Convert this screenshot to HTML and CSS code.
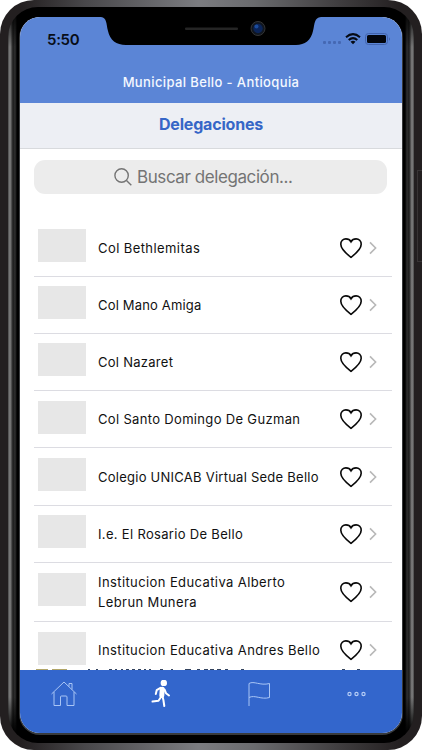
FILE: index.html
```html
<!DOCTYPE html>
<html lang="es">
<head>
<meta charset="utf-8">
<title>Delegaciones</title>
<link rel="stylesheet" href="styles.css">
</head>
<body>
<svg class="defs" width="0" height="0">
  <symbol id="heart" viewBox="0 0 24 22"><path d="M12 20.3C8.5 17.6 1.8 12.6 1.8 7.3C1.8 4 4.1 1.9 6.9 1.9C9.2 1.9 11 3 12 4.800C13 3 14.8 1.9 17.1 1.9C19.9 1.9 22.2 4 22.2 7.3C22.2 12.6 15.5 17.6 12 20.3Z"/></symbol>
  <symbol id="chevron" viewBox="0 0 8 14"><path d="M1 1.4L6.6 7L1 12.6"/></symbol>
</svg>
<div class="phone">
  <i class="side-button"></i>
  <div class="bezel">
    <div class="screen">
      <header class="header">
        <div class="status">
          <span class="time">5:50</span>
          <svg class="indicators" width="70" height="14" viewBox="0 0 70 14">
            <g fill="#4568b3"><rect x="0" y="8" width="3" height="3" rx="1"/><rect x="5" y="8" width="3" height="3" rx="1"/><rect x="10" y="8" width="3" height="3" rx="1"/><rect x="15" y="8" width="3" height="3" rx="1"/></g>
            <g fill="none" stroke="#050a14" stroke-width="2"><path d="M23 4.2Q30 -2 37 4.2"/><path d="M25.7 7Q30 3.2 34.3 7"/></g>
            <path d="M27.5 8.7Q30 7 32.5 8.7L30 11.3Z" fill="#050a14"/>
            <rect x="42.5" y=".5" width="22" height="11" rx="3" fill="none" stroke="#4264ae"/>
            <rect x="44" y="2" width="19" height="8" rx="1.5" fill="#02050c"/>
            <path d="M66 4.2Q68 6 66 7.8Z" fill="#4264ae"/>
          </svg>
        </div>
        <div class="place"><span>Municipal Bello - Antioquia</span></div>
      </header>
      <div class="title"><span>Delegaciones</span></div>
      <main class="content">
        <div class="search">
          <svg width="18" height="18" viewBox="0 0 18 18"><circle cx="7.6" cy="7.5" r="6.7"/><path d="M12.5 12.4L17.3 17.2"/></svg>
          <span>Buscar delegación...</span>
        </div>
        <ul class="list">
          <li class="row"><i class="thumb"></i><span class="name n1">Col Bethlemitas</span><svg class="heart"><use href="#heart"/></svg><svg class="chevron"><use href="#chevron"/></svg></li>
          <li class="row"><i class="thumb"></i><span class="name n2">Col Mano Amiga</span><svg class="heart"><use href="#heart"/></svg><svg class="chevron"><use href="#chevron"/></svg></li>
          <li class="row"><i class="thumb"></i><span class="name n3">Col Nazaret</span><svg class="heart"><use href="#heart"/></svg><svg class="chevron"><use href="#chevron"/></svg></li>
          <li class="row"><i class="thumb"></i><span class="name n4">Col Santo Domingo De Guzman</span><svg class="heart"><use href="#heart"/></svg><svg class="chevron"><use href="#chevron"/></svg></li>
          <li class="row"><i class="thumb"></i><span class="name n5">Colegio UNICAB Virtual Sede Bello</span><svg class="heart"><use href="#heart"/></svg><svg class="chevron"><use href="#chevron"/></svg></li>
          <li class="row"><i class="thumb"></i><span class="name n6">I.e. El Rosario De Bello</span><svg class="heart"><use href="#heart"/></svg><svg class="chevron"><use href="#chevron"/></svg></li>
          <li class="row tall"><i class="thumb"></i><span class="name n7">Institucion Educativa Alberto<br>Lebrun Munera</span><svg class="heart"><use href="#heart"/></svg><svg class="chevron"><use href="#chevron"/></svg></li>
          <li class="row last"><i class="thumb"></i><span class="name n8">Institucion Educativa Andres Bello</span><svg class="heart"><use href="#heart"/></svg><svg class="chevron"><use href="#chevron"/></svg></li>
        </ul>
      </main>
      <!-- sliver of the rows that scroll beneath the tab bar -->
      <svg class="sliver" width="382" height="1" viewBox="0 0 382 1">
        <path d="M16 .5H28M32 .5H47" stroke="#b1a568"/>
        <path d="M68 .5H70M76 .5H78M89 .5H92M95 .5H97M101 .5H103M106 .5H109M112 .5H115M118 .5H121M124 .5H126M129 .5H131M140 .5H143M151 .5H153M165 .5H171M177 .5H180M184 .5H188M190 .5H194M197 .5H201M205 .5H208M221 .5H224M322 .5H325M337 .5H340" stroke="#34445f"/>
      </svg>
      <nav class="tabs">
        <svg viewBox="0 0 28 28"><g fill="none" stroke="#a9c5f5" stroke-width="1"><path d="M1.5 14L14 2L26.5 14M4 12V25.5H10.5V17Q10.500 16 11.500 16H16Q17 16 17 17V25.500H24V12M19 6.500V3.500H22V9.500"/></g></svg>
        <svg viewBox="0 0 28 28"><circle cx="15.800" cy="2.900" r="3.200" fill="#fff"/><g fill="none" stroke="#fff" stroke-linecap="round" stroke-linejoin="round"><path d="M14.200 9.300L13.800 15.500" stroke-width="5"/><path d="M12.500 7.800L8.700 10.200L7.800 14M16.500 9.500L18 13.200L21 15.500M13 17L10.500 20.800L4.500 21.600M14.500 16.500L15.400 20L16.300 26" stroke-width="2"/></g></svg>
        <svg viewBox="0 0 28 28"><path d="M4 26V3.500C9 .5 15 6 24.500 3.500V17.500C16 20 10 14.500 4 17.500" fill="none" stroke="#a9c5f5"/></svg>
        <svg viewBox="0 0 28 28"><g fill="none" stroke="#b4ccf6" stroke-width="1.200"><circle cx="6.500" cy="14" r="1.600"/><circle cx="13.500" cy="14" r="1.600"/><circle cx="20.500" cy="14" r="1.600"/></g></svg>
      </nav>
    </div>
    <svg class="notch" width="220" height="29" viewBox="0 0 220 29">
      <path d="M0 0H220C213 1 214 6 212 14C210 23 204 28 195 28H25C15 28 9 23 7 14C5 6 6 1 0 0Z"/>
      <rect x="84" y="10.500" width="53" height="2.500" rx="1" fill="#252525"/>
      <circle cx="157" cy="11.500" r="7" fill="#10161f" stroke="#343434"/><circle cx="157" cy="11.500" r="4.700" fill="#0b2458"/><circle cx="155.500" cy="9.500" r="2" fill="#1c4c9c"/>
    </svg>
  </div>
</div>
</body>
</html>
```
FILE: styles.css
```css
* { box-sizing: border-box; }
body { margin: 0; background: #fff; font-family: Inter, "Liberation Sans", sans-serif; overflow: hidden; }
.defs { position: absolute; }
.phone { position: relative; width: 422px; height: 750px; padding: 7px 8px; border-radius: 34px; background: linear-gradient(90deg, #231f20 5%, #48474a 20%, #7b7c80 47%, #6a6b6e 60%, #403e40 80%, #231f20 95%); }
.side-button { position: absolute; right: 0; top: 170px; width: 5px; height: 92px; border: 1px solid #383435; border-right: 0; }
.bezel {
  position: relative; height: 736px; padding: 10px 12px; border-radius: 30px;
  background:
    linear-gradient(#000, transparent 40px, transparent 690px, #000 726px),
    linear-gradient(90deg, #484848, #858585 2px, #606060 3px, #1b1b1b 5px, #303030 7px, #000 9px, #000 397px, #303030 399px, #1b1b1b 401px, #606060 403px, #858585 404px, #484848);
}
.screen { height: 716px; width: 382px; border-radius: 20px; overflow: hidden; background: #fff; display: flex; flex-direction: column; box-shadow: 0 1px 0 1px #383a3c; }
.header { height: 86px; background: #5b85d6; display: flex; flex-direction: column; }
.status { height: 48px; padding: 13px 0 0 27px; display: flex; }
.time { width: 276px; font-size: 15px; line-height: 20px; font-weight: 600; letter-spacing: -.3px; color: #080e18; }
.indicators { margin-top: 3px; }
.place { color: #f4f8ff; font-size: 13px; font-weight: 500; letter-spacing: .38px; line-height: 35px; text-align: center; }
.title { height: 46px; background: #edeff4; border-bottom: 1px solid #d8dadd; text-align: center; font-size: 16px; line-height: 42px; font-weight: 700; letter-spacing: -.2px; color: #3566c7; }
.content { height: 520px; padding: 11px 10px 0 14px; overflow: hidden; }
.search { width: 353px; height: 34px; border-radius: 11px; background: #ececec; display: flex; align-items: center; padding-left: 80px; gap: 5px; color: #747474; font-size: 17px; letter-spacing: -.42px; white-space: nowrap; }
.search svg { fill: none; stroke: #747474; stroke-width: 1.4; }
.list { margin: 25.700px 0 0; padding: 0; list-style: none; }
.row { height: 57.2px; padding-left: 4px; border-bottom: 1px solid #dcdce2; display: flex; align-items: center; }
.row.tall { height: 59.5px; }
.thumb { width: 48px; height: 33px; margin: -4.500px 12px 0 0; background: #e7e7e7; }
.name { width: 241px; font-size: 13px; line-height: 20px; color: #111; white-space: nowrap; }
.n1 { letter-spacing: .42px; }
.n2 { letter-spacing: .17px; }
.n3 { letter-spacing: .27px; }
.n4 { letter-spacing: .33px; }
.n5 { letter-spacing: .25px; }
.n6 { letter-spacing: .32px; }
.n7, .n8 { letter-spacing: .4px; }
.heart { width: 24px; height: 22px; fill: none; stroke: #090909; stroke-width: 1.600; }
.chevron { width: 8px; height: 14px; margin-left: 6px; fill: none; stroke: #b8b8b8; stroke-width: 1.6; }
.sliver { display: block; flex: none; }
.tabs { height: 63px; padding: 10px 0 0 30px; background: #3366cc; display: flex; gap: 69.500px; }
.tabs svg { width: 28px; height: 28px; }
.notch { position: absolute; left: 93px; top: 10px; }
```
